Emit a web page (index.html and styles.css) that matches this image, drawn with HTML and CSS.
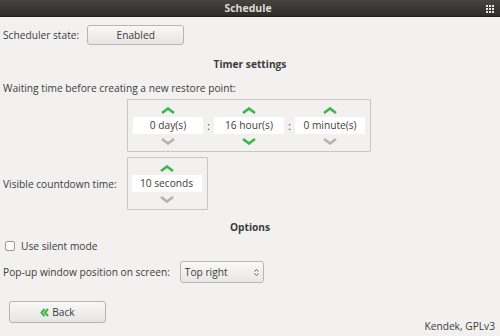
FILE: index.html
```html
<!DOCTYPE html>
<html>
<head>
<meta charset="utf-8">
<link rel="stylesheet" href="styles.css">
</head>
<body>
<div class="titlebar">
  <span class="title">Schedule</span>
  <svg class="grip" width="9" height="8" viewBox="0 0 9 8">
    <g fill="#e8e8e8">
      <rect x="0" y="0" width="2" height="2"/><rect x="3" y="0" width="2" height="2"/><rect x="6" y="0" width="2" height="2"/>
      <rect x="0" y="3" width="2" height="2"/><rect x="3" y="3" width="2" height="2"/><rect x="6" y="3" width="2" height="2"/>
      <rect x="0" y="6" width="2" height="2"/><rect x="3" y="6" width="2" height="2"/><rect x="6" y="6" width="2" height="2"/>
    </g>
  </svg>
</div>
<div class="content">
  <div class="row state-row">
    <span class="label">Scheduler state:</span>
    <div class="btn state-btn">Enabled</div>
  </div>
  <div class="heading timer-heading">Timer settings</div>
  <div class="label waiting">Waiting time before creating a new restore point:</div>
  <div class="spin-wrap">
    <div class="spinbox">
      <div class="spin">
        <svg class="chev" width="16" height="7" viewBox="0 0 16 7"><path d="M2 6 L8 1.5 L14 6" class="on"/></svg>
        <div class="entry e-day">0 day(s)</div>
        <svg class="chev" width="16" height="7" viewBox="0 0 16 7"><path d="M2 1 L8 5.5 L14 1" class="off"/></svg>
      </div>
      <span class="colon">:</span>
      <div class="spin">
        <svg class="chev" width="16" height="7" viewBox="0 0 16 7"><path d="M2 6 L8 1.5 L14 6" class="on"/></svg>
        <div class="entry">16 hour(s)</div>
        <svg class="chev" width="16" height="7" viewBox="0 0 16 7"><path d="M2 1 L8 5.5 L14 1" class="on"/></svg>
      </div>
      <span class="colon">:</span>
      <div class="spin">
        <svg class="chev" width="16" height="7" viewBox="0 0 16 7"><path d="M2 6 L8 1.5 L14 6" class="on"/></svg>
        <div class="entry">0 minute(s)</div>
        <svg class="chev" width="16" height="7" viewBox="0 0 16 7"><path d="M2 1 L8 5.5 L14 1" class="off"/></svg>
      </div>
    </div>
  </div>
  <div class="row countdown-row">
    <span class="label">Visible countdown time:</span>
    <div class="spinbox small">
      <div class="spin">
        <svg class="chev" width="16" height="7" viewBox="0 0 16 7"><path d="M2 6 L8 1.5 L14 6" class="on"/></svg>
        <div class="entry">10 seconds</div>
        <svg class="chev" width="16" height="7" viewBox="0 0 16 7"><path d="M2 1 L8 5.5 L14 1" class="off"/></svg>
      </div>
    </div>
  </div>
  <div class="heading options-heading">Options</div>
  <div class="row check-row">
    <span class="checkbox"></span>
    <span class="label">Use silent mode</span>
  </div>
  <div class="row popup-row">
    <span class="label">Pop-up window position on screen:</span>
    <div class="combo">
      <span>Top right</span>
      <svg class="updown" width="5" height="9" viewBox="0 0 5 9"><path d="M0.5 3.5 L2.5 1.5 L4.5 3.5 M0.5 5.5 L2.5 7.5 L4.5 5.5" /></svg>
    </div>
  </div>
  <div class="row back-row">
    <div class="btn back-btn">
      <svg class="dchev" width="9" height="9" viewBox="0 0 9 9"><path d="M4.5 1 L1.5 4.5 L4.5 8 M8 1 L5 4.5 L8 8"/></svg>
      <span>Back</span>
    </div>
  </div>
  <div class="footer">Kendek, GPLv3</div>
</div>
</body>
</html>
```
FILE: styles.css
```css
* { box-sizing: border-box; }
html, body { margin: 0; padding: 0; }
body {
  width: 500px;
  height: 336px;
  overflow: hidden;
  background: #f2f1f0;
  font-family: "Open Sans", "DejaVu Sans", sans-serif;
  font-size: 10.2px;
  color: #3c3c3c;
}
.titlebar {
  height: 17px;
  background: linear-gradient(#454440, #2d2c29);
  border-bottom: 1px solid #1f1f1d;
  position: relative;
  display: flex;
  justify-content: center;
  align-items: center;
}
.title {
  color: #dfdbd2;
  font-weight: bold;
  font-size: 10.5px;
  margin-left: -4px;
}
.grip { position: absolute; right: 5px; top: 5px; }
.content { padding: 0 0 0 3px; }
.row { display: flex; align-items: center; }
.state-row { margin-top: 8px; height: 20px; }
.btn {
  border: 1px solid #b8b6b1;
  border-radius: 3px;
  background: linear-gradient(#f8f8f7, #e6e5e3);
  display: flex;
  align-items: center;
  justify-content: center;
}
.state-btn { width: 97px; height: 20px; margin-left: 8px; }
.heading { font-weight: bold; text-align: center; margin-left: -3px; }
.timer-heading { margin-top: 12px; height: 15px; line-height: 15px; }
.waiting { margin-top: 9px; height: 15px; line-height: 15px; }
.spin-wrap { display: flex; justify-content: flex-start; margin-top: 3px; padding-left: 124px; }
.spinbox {
  border: 1px solid #c9c7c3;
  border-radius: 1px;
  display: flex;
  align-items: center;
  padding: 0 5px;
  height: 53px;
  width: 244px;
}
.spin { display: flex; flex-direction: column; align-items: center; }
.chev { display: block; }
.chev path { fill: none; stroke-width: 2.6; stroke-linecap: butt; stroke-linejoin: miter; }
.chev .on { stroke: #3eb54a; }
.chev .off { stroke: #b3b3b1; }
.entry {
  width: 70px;
  height: 17px;
  background: #ffffff;
  display: flex;
  align-items: center;
  justify-content: center;
  margin: 3px 0 4px;
}
.colon { width: 12px; text-align: center; }
.countdown-row { margin-top: 5px; height: 53px; }
.spinbox.small { width: 81px; margin-left: 10px; padding: 0 4px; }
.options-heading { margin-top: 10px; height: 15px; line-height: 15px; }
.check-row { margin-top: 3px; height: 15px; }
.checkbox {
  width: 10px; height: 10px;
  border: 1px solid #9d9b97;
  border-radius: 2px;
  background: #fbfbfa;
  margin-left: 2px;
  margin-right: 6px;
}
.popup-row { margin-top: 8px; height: 22px; }
.combo {
  width: 84px;
  height: 22px;
  margin-left: 10px;
  border: 1px solid #b8b6b1;
  border-radius: 3px;
  background: linear-gradient(#f8f8f7, #e9e8e6);
  display: flex;
  align-items: center;
  justify-content: space-between;
  padding: 0 4px 0 4px;
}
.updown path { fill: none; stroke: #555; stroke-width: 1; }
.back-row { margin-top: 18px; height: 22px; padding-left: 6px; }
.back-btn { width: 97px; height: 22px; gap: 3px; }
.dchev path { fill: none; stroke: #3eb54a; stroke-width: 2; }
.footer { text-align: right; padding-right: 5px; margin-top: -3px; line-height: 13px; }
```
